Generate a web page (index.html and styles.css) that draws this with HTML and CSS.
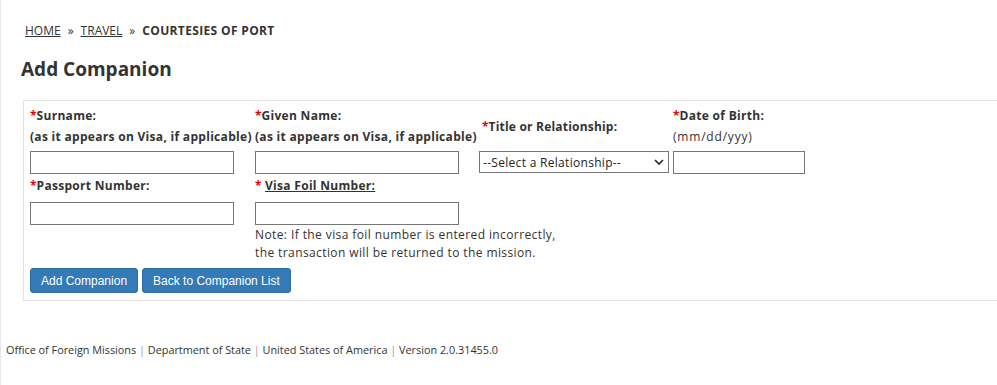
FILE: index.html
```html
<!DOCTYPE html>
<html lang="en">
<head>
    <meta charset="UTF-8">
    <title>Add Companion</title>
    <link rel="stylesheet" href="styles.css">
</head>
<body>
    <div class="page">
        <!-- breadcrumb -->
        <div class="crumbs">
            <a href="#">HOME</a><span class="sep">&raquo;</span><a href="#">TRAVEL</a><span class="sep">&raquo;</span><b>COURTESIES OF PORT</b>
        </div>

        <h1>Add Companion</h1>

        <div class="panel">
            <table class="form">
                <tr class="row-labels">
                    <td class="col1"><span class="req">*</span>Surname:<br>(as it appears on Visa, if applicable)</td>
                    <td class="col2"><span class="req">*</span>Given Name:<br>(as it appears on Visa, if applicable)</td>
                    <td class="col3"><span class="title-label"><span class="req">*</span>Title or Relationship:</span></td>
                    <td class="col4"><span class="req">*</span>Date of Birth:<br><span class="hint">(mm/dd/yyy)</span></td>
                </tr>
                <tr class="row-inputs">
                    <td><input type="text" class="field"></td>
                    <td><input type="text" class="field"></td>
                    <td>
                        <div class="select-wrap">
                            <select class="select">
                                <option>--Select a Relationship--</option>
                            </select>
                            <svg class="chevron" width="10" height="6" viewBox="0 0 10 6"><path d="M1 1l4 4 4-4" fill="none" stroke="#222" stroke-width="1.6"/></svg>
                        </div>
                    </td>
                    <td><input type="text" class="field field-date"></td>
                </tr>
                <tr class="row-labels2">
                    <td><span class="req">*</span>Passport Number:</td>
                    <td><span class="req">*</span> <u>Visa Foil Number:</u></td>
                    <td></td>
                    <td></td>
                </tr>
                <tr class="row-inputs2">
                    <td><input type="text" class="field"></td>
                    <td><input type="text" class="field"></td>
                    <td></td>
                    <td></td>
                </tr>
                <tr class="row-note">
                    <td></td>
                    <td colspan="3" class="note">Note: If the visa foil number is entered incorrectly,<br>the transaction will be returned to the mission.</td>
                </tr>
                <tr class="row-buttons">
                    <td colspan="4">
                        <div class="buttons">
                            <button class="btn">Add Companion</button>
                            <button class="btn">Back to Companion List</button>
                        </div>
                    </td>
                </tr>
            </table>
        </div>

        <div class="footer">
            Office of Foreign Missions <span class="bar">|</span> Department of State <span class="bar">|</span> United States of America <span class="bar">|</span> Version 2.0.31455.0
        </div>
    </div>
</body>
</html>
```

FILE: styles.css
```css
html, body {
    margin: 0;
    padding: 0;
    background-color: #fff;
}
body {
    font-family: "Open Sans", "Noto Sans", Arial, sans-serif;
    font-size: 12px;
    color: #333;
}
.page {
    border-left: 1px solid #e6e6e6;
    min-height: 385px;
    box-sizing: border-box;
    padding-top: 23px;
}
.crumbs {
    padding-left: 24px;
    font-size: 12px;
    line-height: 16px;
    color: #333;
}
.crumbs a {
    color: #333;
}
.crumbs .sep {
    margin: 0 7px;
}
.crumbs b {
    font-weight: 700;
    letter-spacing: 0.35px;
}
h1 {
    margin: 18px 0 0 20px;
    font-size: 19px;
    line-height: 24px;
    font-weight: 700;
    color: #333;
}
.panel {
    margin: 19px 0 0 22px;
    border: 1px solid #e3e3e3;
    border-right: none;
    padding: 4px 6px 7px 6px;
}
.form {
    border-collapse: collapse;
}
.form td {
    padding: 0;
    vertical-align: middle;
    white-space: nowrap;
}
.col1 { width: 225px; }
.col2 { width: 224px; }
.col3 { width: 194px; }
.row-labels td {
    font-weight: 700;
    line-height: 21px;
    letter-spacing: 0.3px;
}
.row-labels .hint {
    font-weight: 400;
    letter-spacing: 0.8px;
}
.row-labels .title-label {
    padding-left: 3px;
    letter-spacing: 0.2px;
}
.row-labels2 td {
    font-weight: 700;
    line-height: 20px;
    letter-spacing: 0.3px;
}
.req {
    color: #e00;
    letter-spacing: 0;
}
.field {
    display: block;
    box-sizing: border-box;
    width: 204px;
    height: 23px;
    margin: 4px 0 2px 0;
    border: 1px solid #767676;
    padding: 2px 4px;
    font: inherit;
}
.field-date {
    width: 132px;
}
.row-inputs2 .field {
    margin: 6px 0 1px 0;
}
.select-wrap {
    position: relative;
    width: 190px;
    margin-top: 1px;
}
.select {
    display: block;
    box-sizing: border-box;
    width: 190px;
    height: 22px;
    border: 1px solid #767676;
    padding: 0 0 0 3px;
    font-family: inherit;
    font-size: 12px;
    letter-spacing: 0.3px;
    color: #222;
    background: #fff;
    appearance: none;
    -webkit-appearance: none;
}
.chevron {
    position: absolute;
    right: 5px;
    top: 8px;
}
.note {
    padding-top: 5px;
    line-height: 18px;
    letter-spacing: 0.4px;
    color: #333;
}
.buttons {
    display: flex;
    gap: 4px;
    margin-top: 6px;
}
.btn {
    font-family: "Liberation Sans", Arial, sans-serif;
    font-size: 12px;
    color: #fff;
    background-color: #337ab7;
    border: 1px solid #2e6da4;
    border-radius: 3px;
    height: 25px;
    padding: 0 10px;
    margin: 0;
}
.footer {
    margin-top: 41px;
    padding-left: 5px;
    font-size: 10.85px;
    line-height: 16px;
    color: #333;
}
.footer .bar {
    color: #999;
}
```
